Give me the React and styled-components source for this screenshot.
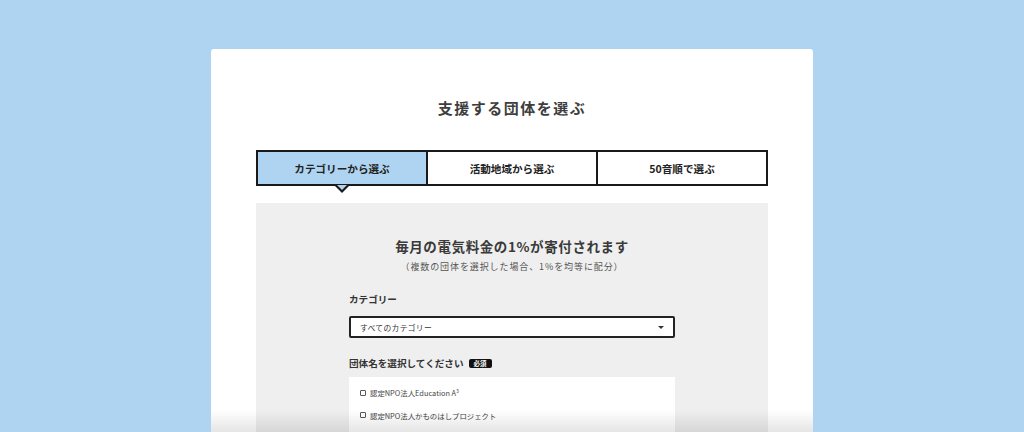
import React from "react";
import styled, { createGlobalStyle } from "styled-components";

const Global = createGlobalStyle`
  html, body { margin: 0; padding: 0; height: 432px; overflow: hidden; }
  body {
    background: #aed4f1;
    font-family: "Noto Sans CJK JP", "Noto Sans", sans-serif;
    color: #333;
  }
  * { box-sizing: border-box; }
`;

const Page = styled.div`
  display: flex;
  justify-content: center;
  padding-top: 49px;
`;

const Card = styled.div`
  position: relative;
  width: 602px;
  background: #fff;
  border-radius: 3px;
  padding: 48px 45px 0;
  min-height: 600px;
`;

const Title = styled.h1`
  margin: 0;
  text-align: center;
  font-size: 15px;
  line-height: 22px;
  font-weight: 700;
  letter-spacing: 1.5px;
  color: #3e3e3e;
`;

const Tabs = styled.div`
  display: flex;
  margin-top: 31px;
  border: 2px solid #1a1a1a;
  height: 36px;
`;

const Tab = styled.div`
  position: relative;
  flex: 1;
  display: flex;
  align-items: center;
  justify-content: center;
  font-size: 10.6px;
  font-weight: 700;
  color: #222;
  background: ${(p) => (p.$active ? "#aed4f1" : "#fff")};
  & + & { border-left: 2px solid #1a1a1a; }

  ${(p) =>
    p.$active &&
    `
    &::before {
      content: "";
      position: absolute;
      left: 50%;
      bottom: -9px;
      transform: translateX(-50%);
      border-left: 7px solid transparent;
      border-right: 7px solid transparent;
      border-top: 7px solid #1a1a1a;
    }
    &::after {
      content: "";
      position: absolute;
      left: 50%;
      bottom: -6px;
      transform: translateX(-50%);
      border-left: 5px solid transparent;
      border-right: 5px solid transparent;
      border-top: 5px solid #aed4f1;
    }
  `}
`;

const Panel = styled.div`
  margin-top: 17px;
  background: #efefef;
  padding: 33px 93px 40px;
`;

const Lead = styled.h2`
  margin: 0;
  text-align: center;
  font-size: 13.5px;
  line-height: 20px;
  font-weight: 700;
  letter-spacing: 0.6px;
  color: #3a3a3a;
`;

const Note = styled.p`
  margin: 4px 0 0;
  text-align: center;
  font-size: 9px;
  line-height: 14px;
  letter-spacing: 0.9px;
  color: #555;
`;

const Label = styled.div`
  display: flex;
  align-items: center;
  gap: 5px;
  margin-top: ${(p) => p.$mt}px;
  font-size: 9.6px;
  line-height: 15px;
  font-weight: 700;
  color: #333;
`;

const Badge = styled.span`
  display: inline-flex;
  align-items: center;
  justify-content: center;
  width: 23px;
  height: 9px;
  border-radius: 2px;
  background: #111;
  color: #fff;
  font-size: 6.5px;
  font-weight: 700;
`;

const Select = styled.div`
  display: flex;
  align-items: center;
  justify-content: space-between;
  margin-top: 9px;
  height: 22px;
  padding: 0 9px 0 9px;
  background: #fff;
  border: 2px solid #222;
  border-radius: 2px;
  font-size: 7.8px;
  letter-spacing: 0.3px;
  color: #333;
`;

const Caret = styled.span`
  width: 0;
  height: 0;
  border-left: 3px solid transparent;
  border-right: 3px solid transparent;
  border-top: 3.5px solid #333;
`;

const List = styled.div`
  margin-top: 6px;
  background: #fff;
  padding: 5px 11px;
  min-height: 120px;
`;

const Item = styled.label`
  display: flex;
  align-items: center;
  gap: 4px;
  height: 22px;
  font-size: 7.4px;
  color: #444;
`;

const Check = styled.span`
  width: 6px;
  height: 6px;
  border: 1px solid #555;
  border-radius: 1px;
  background: #fff;
  flex: none;
`;

const Fade = styled.div`
  position: fixed;
  left: 0;
  right: 0;
  bottom: 0;
  height: 22px;
  pointer-events: none;
  display: flex;
  justify-content: center;
`;

const FadeInner = styled.div`
  width: 602px;
  height: 100%;
  background: linear-gradient(to bottom, rgba(0,0,0,0), rgba(0,0,0,0.1));
`;

const items = [
  <>認定NPO法人Education A<sup style={{ fontSize: "5px" }}>3</sup></>,
  "認定NPO法人かものはしプロジェクト",
];

export default function App() {
  return (
    <>
      <Global />
      <Page>
        <Card>
          <Title>支援する団体を選ぶ</Title>
          <Tabs>
            <Tab $active>カテゴリーから選ぶ</Tab>
            <Tab>活動地域から選ぶ</Tab>
            <Tab>50音順で選ぶ</Tab>
          </Tabs>
          <Panel>
            <Lead>毎月の電気料金の1%が寄付されます</Lead>
            <Note>（複数の団体を選択した場合、1%を均等に配分）</Note>
            <Label $mt={18}>カテゴリー</Label>
            <Select>
              <span>すべてのカテゴリー</span>
              <Caret />
            </Select>
            <Label $mt={18}>
              団体名を選択してください<Badge>必須</Badge>
            </Label>
            <List>
              {items.map((t, i) => (
                <Item key={i}>
                  <Check />
                  <span>{t}</span>
                </Item>
              ))}
            </List>
          </Panel>
        </Card>
      </Page>
      <Fade>
        <FadeInner />
      </Fade>
    </>
  );
}
